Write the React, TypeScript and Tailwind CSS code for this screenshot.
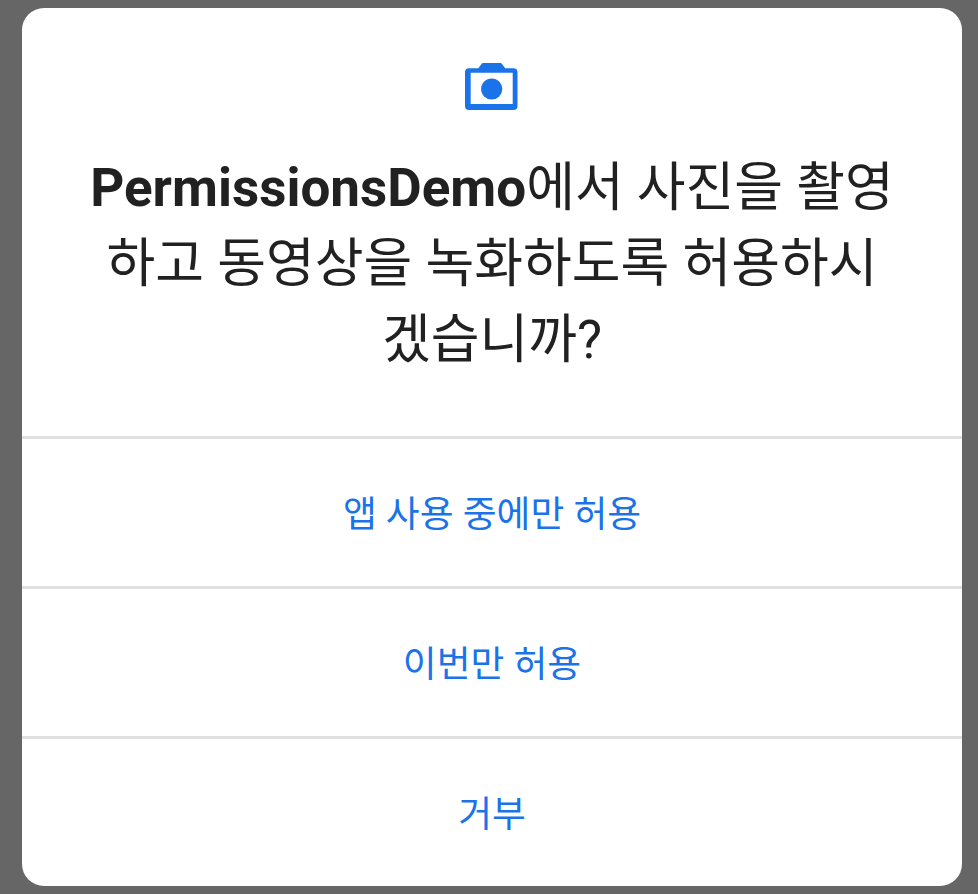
const FONT = "font-['Roboto','Noto_Sans_CJK_KR',sans-serif]";

function CameraIcon() {
  return (
    <svg width="54" height="48" viewBox="0 0 54 48" className="block" fill="#1a73e8">
      <path
        fillRule="evenodd"
        d="M4 5.300h9.300L16.500 1a2 2 0 0 1 1.500-1h17.500a2 2 0 0 1 1.500 1l3.200 4.300h8.300a4 4 0 0 1 4 4V43a4 4 0 0 1-4 4H4a4 4 0 0 1-4-4V9.300a4 4 0 0 1 4-4zM5.700 9.700V41h42V9.700z"
      />
      <circle cx="26.700" cy="26" r="10.600" />
    </svg>
  );
}

function ActionRow({ label }: { label: string }) {
  return (
    <div className="flex h-[150px] items-center justify-center border-t-[3px] border-[#e0e0e0] pt-1 text-[36.800px] text-[#1a73e8]">
      {label}
    </div>
  );
}

export default function App() {
  return (
    <div className={`flex h-[894px] w-[978px] items-start justify-start bg-[#666666] pl-[22px] pt-2 ${FONT}`}>
      <div className="flex h-[878px] w-[940px] flex-col overflow-hidden rounded-[22px] bg-white">
        <div className="flex h-[428px] flex-col items-center pt-[55px]">
          <CameraIcon />
          <h1 className="mt-[39px] w-[810px] text-center text-[53px] font-normal leading-[76px] text-[#212121]">
            <span className="font-bold">PermissionsDemo</span>에서 사진을 촬영하고 동영상을 녹화하도록 허용하시겠습니까?
          </h1>
        </div>
        <ActionRow label="앱 사용 중에만 허용" />
        <ActionRow label="이번만 허용" />
        <ActionRow label="거부" />
      </div>
    </div>
  );
}
